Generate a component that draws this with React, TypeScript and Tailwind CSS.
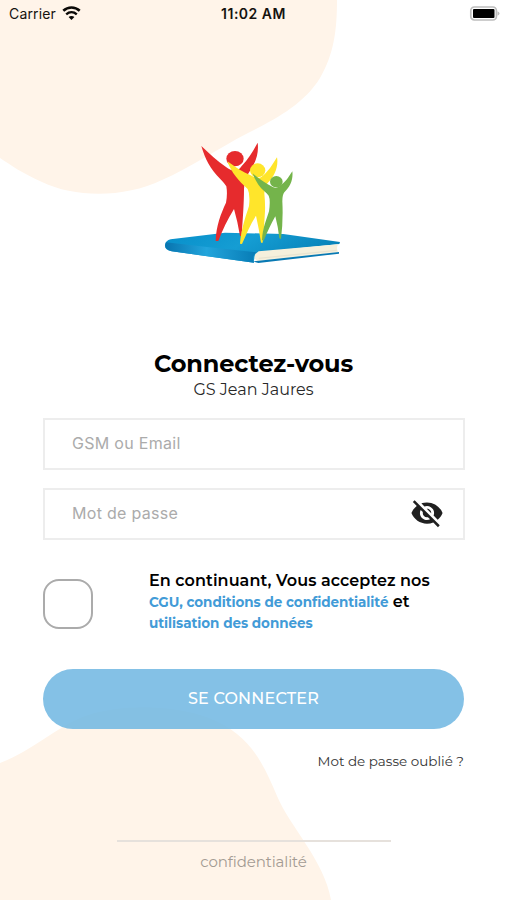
import React, { useState } from 'react';
import { MdVisibility, MdVisibilityOff } from 'react-icons/md';

const StatusBar: React.FC = () => (
  <header className="h-7 grid grid-cols-3 items-center pl-[9px] pr-[7px] font-['Inter',sans-serif] text-[14px] text-[#15120f]">
    <div className="flex items-center gap-[6px]">
      <span className="-translate-y-px tracking-[0.15px]">Carrier</span>
      <svg className="-translate-y-px" width="19" height="15" viewBox="0 0 19 15" fill="none" stroke="#0b0907">
        <path d="M1.3 4.8C6 .4 13 .4 17.7 4.8" strokeWidth="2.6" />
        <path d="M4.2 8.3C7.4 5.5 11.6 5.5 14.8 8.3" strokeWidth="2.4" />
        <path d="M9.5 14 6.6 11C8.2 9.5 10.8 9.5 12.4 11Z" fill="#0b0907" stroke="none" />
      </svg>
    </div>
    <span className="-translate-x-px -translate-y-px text-center font-semibold tracking-[0.5px] whitespace-nowrap">11:02 AM</span>
    <svg className="justify-self-end -translate-y-px" width="31" height="15" viewBox="0 0 31 15">
      <rect x="1.8" y="1" width="25.6" height="13" rx="3.5" fill="#fff" stroke="#bdbdbd" strokeWidth="1.7" />
      <rect x="4" y="3" width="21.5" height="9" rx="1" fill="#000" />
      <path d="M28.5 5.2q2 .8 2 2.3t-2 2.3z" fill="#bdbdbd" />
    </svg>
  </header>
);

const Logo: React.FC = () => (
  <svg className="mx-auto -translate-x-[4px]" width="200" height="145" viewBox="0 0 600 435">
    <defs>
      <linearGradient id="cover" x1="0" y1="0" x2="1" y2="0.3">
        <stop offset="0" stopColor="#078fca" />
        <stop offset="0.5" stopColor="#159dd3" />
        <stop offset="1" stopColor="#0783b9" />
      </linearGradient>
      <linearGradient id="spine" x1="0" y1="0" x2="1" y2="0">
        <stop offset="0" stopColor="#0874af" />
        <stop offset="0.45" stopColor="#22a5dc" />
        <stop offset="1" stopColor="#077bb5" />
      </linearGradient>
    </defs>
    {/* Book */}
    <path d="M62 328 L225 308 L400 312 L570 336 L568 342 L330 367 Q309 374 312 398 L65 364 Q43 360 45 345 Q47 331 62 328Z" fill="url(#cover)" />
    <path d="M48 337 Q180 353 320 367 Q303 379 312 398 L65 364 Q39 357 48 337Z" fill="url(#spine)" />
    <path d="M326 364 L565 343 Q557 353 565 367 L322 394 Q303 379 326 364Z" fill="#f5f0dc" />
    <path d="M326 385 L560 361" stroke="#e9e4d0" strokeWidth="4" />
    <path d="M309 394 L567 366 L567 371 L325 399Z" fill="#0879b3" />
    {/* Red figure */}
    <path d="M154 48 C179 72 202 94 227 110 Q242 122 255 123 Q266 121 275 108 C296 86 308 65 323 38 C327 70 317 98 300 122 Q282 148 282 177 C282 220 278 273 275 318 L270 318 Q263 275 252 237 C232 269 218 299 205 333 L197 333 C198 288 213 250 228 218 Q233 192 229 169 Q224 160 213 149 C179 115 166 88 154 48Z" fill="#e62b2d" />
    <ellipse cx="255" cy="86" rx="26" ry="23" fill="#e62b2d" />
    {/* Yellow figure */}
    <path d="M232 94 C255 111 278 126 302 136 Q319 147 333 142 C354 126 367 105 381 82 C386 109 374 138 353 159 Q343 170 343 190 Q346 223 345 244 Q342 297 338 338 L333 338 Q327 297 318 257 C300 285 288 315 276 342 L270 341 C273 299 286 263 297 228 Q301 193 293 177 C265 152 245 129 232 94Z" fill="#ffe52b" />
    <ellipse cx="323" cy="121" rx="23" ry="21" fill="#ffe52b" />
    {/* Green figure */}
    <path d="M308 130 C325 146 348 161 367 170 Q378 177 388 169 C408 155 416 141 427 124 C430 148 421 170 403 187 Q397 194 397 214 Q400 271 393 327 L388 325 Q384 289 376 259 Q359 289 341 332 L336 330 C338 293 349 271 357 244 Q362 210 356 197 Q350 189 343 184 C327 170 315 151 308 130Z" fill="#74b44b" />
    <ellipse cx="379" cy="155" rx="19" ry="17" fill="#74b44b" />
  </svg>
);

const Background: React.FC = () => (
  <svg className="absolute inset-0 -z-10" width="507" height="900" viewBox="0 0 507 900" fill="#fff4e9">
    <path d="M0 0H337C337 30 334 54 320 78C304 104 276 119 248 133C217 149 190 168 162 180C125 198 75 198 42 182C22 173 12 166 0 158Z" />
    <path d="M0 763C34 750 56 727 85 716C119 704 173 704 209 718C250 734 263 763 277 796C290 827 324 860 331 900H0Z" />
  </svg>
);

export default function App() {
  const [showPassword, setShowPassword] = useState(false);
  const [accepted, setAccepted] = useState(false);

  return (
    <div className="relative isolate w-[507px] h-[900px] overflow-hidden bg-white font-['Montserrat','Inter',sans-serif]">
      <Background />
      <StatusBar />

      <main className="px-[43px] pt-[102px]">
        <Logo />

        <div className="mt-[75px] text-center text-black">
          <h1 className="h-7 leading-7 text-[24px] font-bold tracking-[-0.15px] whitespace-nowrap">Connectez-vous</h1>
          <p className="h-[22px] leading-[23px] text-[16px] text-[#292929]">GS Jean Jaures</p>
        </div>

        {/* Credentials */}
        <div className="mt-[18px] space-y-[18px]">
          <div className="h-[52px] w-[422px] border-2 border-[#ededed] bg-white flex items-center pl-[27px]">
            <input
              type="text"
              placeholder="GSM ou Email"
              className="w-full -translate-y-px outline-none font-['Inter',sans-serif] text-[16px] tracking-[0.3px] placeholder:text-[#ababab]"
            />
          </div>
          <div className="h-[52px] w-[422px] border-2 border-[#ededed] bg-white flex items-center pl-[27px] pr-[19px]">
            <input
              type={showPassword ? 'text' : 'password'}
              placeholder="Mot de passe"
              className="w-full min-w-0 -translate-y-px outline-none font-['Inter',sans-serif] text-[16px] tracking-[0.3px] placeholder:text-[#ababab]"
            />
            <button onClick={() => setShowPassword(!showPassword)} className="shrink-0 -translate-y-px text-[#202020]">
              {showPassword ? <MdVisibility size={34} /> : <MdVisibilityOff size={34} />}
            </button>
          </div>
        </div>

        {/* Terms */}
        <div className="mt-[30px] flex items-start">
          <button
            onClick={() => setAccepted(!accepted)}
            className={`mt-[9px] size-[50px] shrink-0 rounded-[16px] border-2 border-[#ababab] ${accepted ? 'bg-[#86c0e6]' : 'bg-white'}`}
          />
          <div className="ml-[56px] text-[16px] font-semibold text-black whitespace-nowrap">
            <p className="h-[22px] leading-[22px] tracking-[0.08px]">En continuant, Vous acceptez nos</p>
            <p className="h-[21px] leading-[20px]">
              <span className="text-[13.5px] font-bold tracking-[-0.05px] text-[#429bd7]">CGU, conditions de confidentialité</span> et
            </p>
            <p className="h-[21px] leading-[20px] text-[13.5px] font-bold tracking-[-0.05px] text-[#429bd7]">utilisation des données</p>
          </div>
        </div>

        <button className="mt-[35px] h-[60px] w-[421px] rounded-full bg-[#6fb6e2]/85 text-[16px] font-medium tracking-[0.2px] text-white">
          SE CONNECTER
        </button>

        <p className="mt-[22px] h-5 leading-5 text-right text-[13.5px] text-[#333]">Mot de passe oublié ?</p>
      </main>

      <footer className="mt-[69px] mx-auto w-[274px] border-t-2 border-[#e6e1dc] pt-[9px] text-center text-[15px] leading-[22px] tracking-[-0.12px] text-[#a39b93]">
        confidentialité
      </footer>
    </div>
  );
}
